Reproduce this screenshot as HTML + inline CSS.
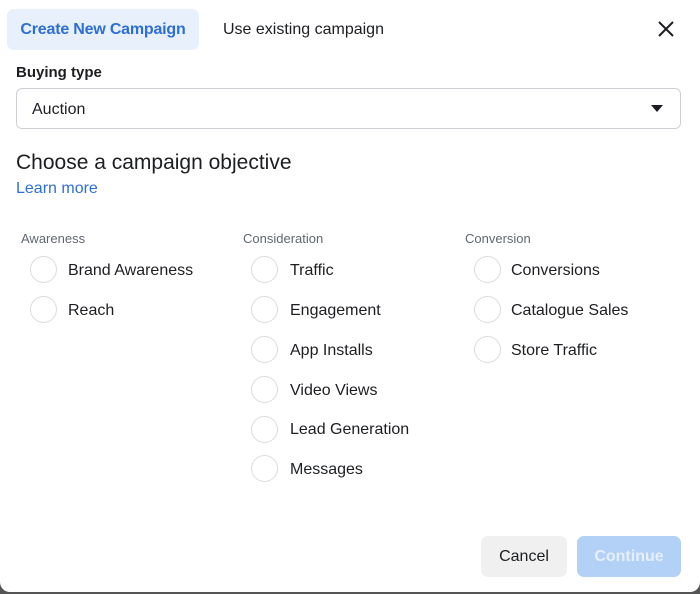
<!DOCTYPE html>
<html><head><style>
html,body{margin:0;padding:0;background:#555;}
body{width:700px;height:594px;position:relative;overflow:hidden;font-family:"Liberation Sans",sans-serif;}
.card{position:absolute;left:0;top:0;width:700px;height:592px;background:#fff;border-radius:0 0 10px 10px;}
.a{position:absolute;white-space:nowrap;}
.tab{left:7px;top:9px;width:192px;height:41px;background:#e8f0fc;border-radius:7px;color:#2d6fd6;font-weight:bold;font-size:16px;line-height:42px;text-align:center;letter-spacing:-0.2px;}
.r{position:absolute;width:27px;height:27px;border:1.5px solid #dcdcdc;border-radius:50%;box-sizing:border-box;}
.l{position:absolute;font-size:16px;color:#1c1e21;}
.h{position:absolute;font-size:13px;color:#606770;}
</style></head><body><div class="card">
<div class="a tab">Create New Campaign</div>
<div class="a" style="left:223px;top:21px;font-size:16px;color:#1c1e21">Use existing campaign</div>
<svg class="a" style="left:657px;top:20px" width="18" height="18"><path d="M2 2L16 16M16 2L2 16" stroke="#1c1e21" stroke-width="2"/></svg>
<div class="a" style="left:16px;top:64px;font-size:15px;font-weight:bold;color:#1c1e21">Buying type</div>
<div class="a" style="left:16px;top:88px;width:665px;height:41px;border:1px solid #ccd0d5;border-radius:6px;box-sizing:border-box"></div>
<div class="a" style="left:32px;top:101px;font-size:16px;color:#1c1e21">Auction</div>
<svg class="a" style="left:651px;top:105px" width="12" height="7"><path d="M0 0H12L6 7Z" fill="#1c1e21"/></svg>
<div class="a" style="left:16px;top:151px;font-size:21px;color:#1c1e21">Choose a campaign objective</div>
<div class="a" style="left:16px;top:180px;font-size:16px;color:#2d6fd6">Learn more</div>
<div class="h" style="left:21px;top:231px">Awareness</div>
<div class="h" style="left:243px;top:231px">Consideration</div>
<div class="h" style="left:465px;top:231px">Conversion</div>
<div class="r" style="left:30px;top:256px"></div><div class="l" style="left:68px;top:262px">Brand Awareness</div>
<div class="r" style="left:30px;top:296px"></div><div class="l" style="left:68px;top:302px">Reach</div>
<div class="r" style="left:251px;top:256px"></div><div class="l" style="left:290px;top:262px">Traffic</div>
<div class="r" style="left:251px;top:296px"></div><div class="l" style="left:290px;top:302px">Engagement</div>
<div class="r" style="left:251px;top:336px"></div><div class="l" style="left:290px;top:342px">App Installs</div>
<div class="r" style="left:251px;top:376px"></div><div class="l" style="left:290px;top:382px">Video Views</div>
<div class="r" style="left:251px;top:416px"></div><div class="l" style="left:290px;top:421px">Lead Generation</div>
<div class="r" style="left:251px;top:455px"></div><div class="l" style="left:290px;top:461px">Messages</div>
<div class="r" style="left:474px;top:256px"></div><div class="l" style="left:511px;top:262px">Conversions</div>
<div class="r" style="left:474px;top:296px"></div><div class="l" style="left:511px;top:302px">Catalogue Sales</div>
<div class="r" style="left:474px;top:336px"></div><div class="l" style="left:511px;top:342px">Store Traffic</div>
<div class="a" style="left:481px;top:536px;width:86px;height:41px;background:#f0f0f0;border-radius:7px;font-size:16px;line-height:42px;text-align:center;color:#1c1e21">Cancel</div>
<div class="a" style="left:577px;top:536px;width:104px;height:41px;background:#b3d0f7;border-radius:7px;font-size:16px;font-weight:bold;line-height:42px;text-align:center;color:#e6efff">Continue</div>
</div></body></html>
